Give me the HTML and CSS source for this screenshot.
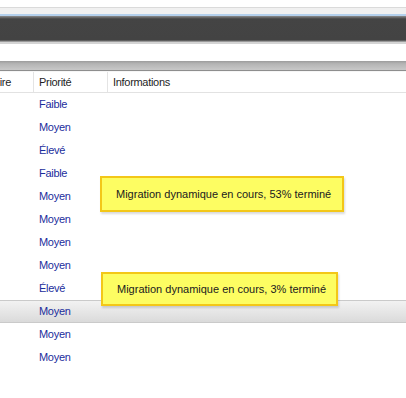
FILE: index.html
```html
<!DOCTYPE html>
<html lang="fr">
<head>
    <meta charset="UTF-8">
    <title>Migrations</title>
    <link rel="stylesheet" href="styles.css">
</head>
<body>
    <div class="top-strip"></div>
    <div class="menu-band"></div>
    <div class="dark-bar"></div>
    <div class="spacer"></div>
    <div class="group-bar"></div>

    <div class="grid">
        <div class="grid-header">
            <div class="col col-first"><span>ire</span></div>
            <div class="col col-prio">Priorité</div>
            <div class="col col-info">Informations</div>
        </div>
        <div class="grid-body">
            <div class="row"><div class="cell-first"></div><div class="cell-prio">Faible</div></div>
            <div class="row"><div class="cell-first"></div><div class="cell-prio">Moyen</div></div>
            <div class="row"><div class="cell-first"></div><div class="cell-prio">Élevé</div></div>
            <div class="row"><div class="cell-first"></div><div class="cell-prio">Faible</div></div>
            <div class="row"><div class="cell-first"></div><div class="cell-prio">Moyen</div></div>
            <div class="row"><div class="cell-first"></div><div class="cell-prio">Moyen</div></div>
            <div class="row"><div class="cell-first"></div><div class="cell-prio">Moyen</div></div>
            <div class="row"><div class="cell-first"></div><div class="cell-prio">Moyen</div></div>
            <div class="row"><div class="cell-first"></div><div class="cell-prio">Élevé</div></div>
            <div class="row selected"><div class="cell-first"></div><div class="cell-prio">Moyen</div></div>
            <div class="row"><div class="cell-first"></div><div class="cell-prio">Moyen</div></div>
            <div class="row"><div class="cell-first"></div><div class="cell-prio">Moyen</div></div>
        </div>

        <div class="tip tip-one">Migration dynamique en cours, 53% terminé</div>
        <div class="tip tip-two">Migration dynamique en cours, 3% terminé</div>
    </div>
</body>
</html>
```

FILE: styles.css
```css
html,
body,
div {
    margin: 0px;
    padding: 0px;
}

body {
    background: #ffffff;
    font-family: "Liberation Sans", Arial, sans-serif;
    font-size: 11px;
    letter-spacing: -0.3px;
    overflow: hidden;
}

.top-strip {
    height: 7px;
    border-bottom: 1px solid #dadada;
}

.menu-band {
    height: 6px;
    background: #f0f0f0;
    border-bottom: 2px solid #b4d0ec;
}

.dark-bar {
    height: 26px;
    background: linear-gradient(#8c8c8c 0px, #5a5a5a 2px, #444444 3px, #434343 24px, #7a7a7a 25px, #b8b8b8 26px);
    border-bottom: 2px solid #d4d4d4;
}

.spacer {
    height: 17px;
}

.group-bar {
    height: 9px;
    background: linear-gradient(#9c9c9c, #b4b4b4 30%, #c8c8c8);
    border-bottom: 1px solid #8e8e8e;
}

.grid {
    position: relative;
}

.grid-header {
    display: flex;
    height: 20px;
    line-height: 20px;
    color: #1e1e1e;
    border-top: 1px solid #f6f6f6;
    border-bottom: 1px solid #e2e2e2;
}

.col {
    box-sizing: border-box;
    border-right: 1px solid #e4e4e4;
    white-space: nowrap;
}

.col-first {
    width: 34px;
    overflow: hidden;
    position: relative;
}

.col-first span {
    position: absolute;
    right: 22px;
}

.col-prio {
    width: 74px;
    padding-left: 5px;
}

.col-info {
    flex: 1;
    padding-left: 5px;
    border-right: none;
}

.row {
    display: flex;
    height: 23px;
    line-height: 23px;
    color: #1b2d9c;
}

.cell-first {
    width: 39px;
}

.row.selected {
    box-sizing: border-box;
    background: linear-gradient(#f2f2f2, #e4e4e4 60%, #dadada);
    border-top: 1px solid #cacaca;
    border-bottom: 1px solid #cacaca;
    line-height: 21px;
}

.tip {
    position: absolute;
    box-sizing: border-box;
    background: #fdfd62;
    border: 2px solid #f3c718;
    box-shadow: 1px 2px 2px rgba(0, 0, 0, 0.15);
    font-size: 11px;
    letter-spacing: 0px;
    color: #202020;
    padding-left: 14px;
    display: flex;
    align-items: center;
}

.tip-one {
    left: 100px;
    top: 105px;
    width: 244px;
    height: 36px;
}

.tip-two {
    left: 101px;
    top: 201px;
    width: 237px;
    height: 34px;
}
```
